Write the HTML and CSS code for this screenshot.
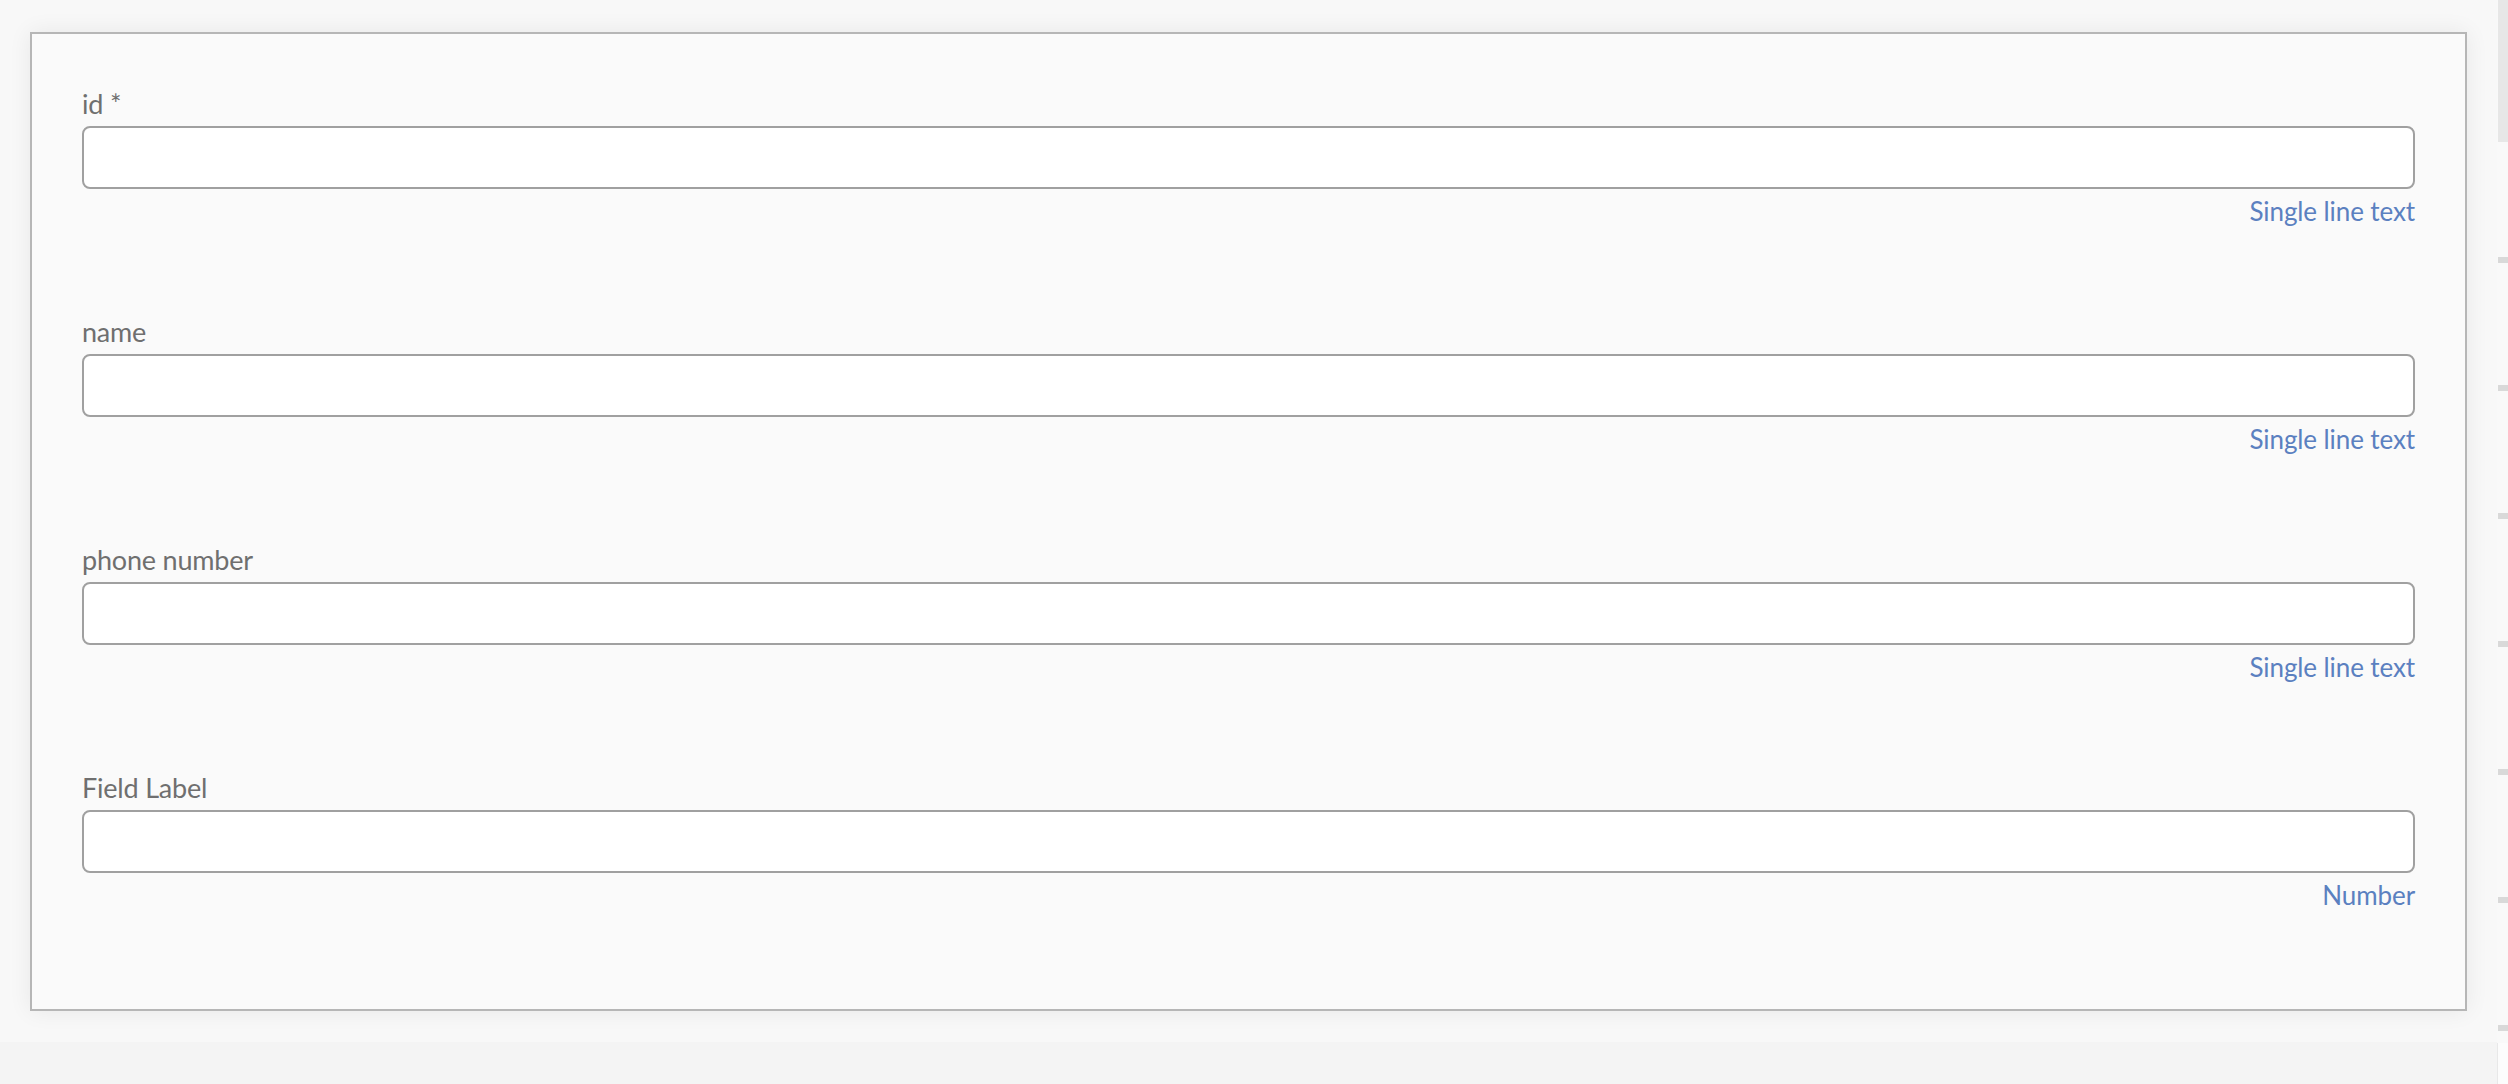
FILE: index.html
```html
<!DOCTYPE html>
<html lang="en">
<head>
<meta charset="utf-8">
<title>Form</title>
<link rel="stylesheet" href="styles.css">
</head>
<body>
  <div class="main">
    <div class="stage">
      <form class="panel">
        <div class="field">
          <label class="label">id *</label>
          <input class="input" type="text">
          <div class="helper">Single line text</div>
        </div>
        <div class="field">
          <label class="label">name</label>
          <input class="input" type="text">
          <div class="helper">Single line text</div>
        </div>
        <div class="field">
          <label class="label">phone number</label>
          <input class="input" type="text">
          <div class="helper">Single line text</div>
        </div>
        <div class="field">
          <label class="label">Field Label</label>
          <input class="input" type="text">
          <div class="helper">Number</div>
        </div>
      </form>
    </div>
    <div class="band"></div>
  </div>
  <div class="strip">
    <div class="strip-top"></div>
    <div class="ticks">
      <span class="tick"></span>
      <span class="tick"></span>
      <span class="tick"></span>
      <span class="tick"></span>
      <span class="tick"></span>
      <span class="tick"></span>
      <span class="tick"></span>
    </div>
    <div class="strip-bottom"></div>
  </div>
</body>
</html>
```

FILE: styles.css
```css
html, body {
  margin: 0;
  padding: 0;
}
body {
  width: 2508px;
  height: 1084px;
  overflow: hidden;
  display: flex;
  background: #f8f8f8;
  font-family: Lato, "Open Sans", sans-serif;
}
.main {
  width: 2497px;
  display: flex;
  flex-direction: column;
}
.stage {
  height: 1042px;
  box-sizing: border-box;
  padding: 32px 0 0 30px;
}
.panel {
  width: 2437px;
  height: 979px;
  box-sizing: border-box;
  margin: 0;
  border: 2px solid #b6b6b6;
  background: #fafafa;
  box-shadow: 0 0 22px rgba(0, 0, 0, 0.07);
  padding: 53px 50px 0 50px;
  display: flex;
  flex-direction: column;
  gap: 88px;
}
.field {
  display: flex;
  flex-direction: column;
}
.label {
  font-size: 27px;
  line-height: 34px;
  letter-spacing: -0.2px;
  color: #6f6f6f;
  margin-bottom: 5px;
}
.input {
  display: block;
  width: 100%;
  height: 63px;
  box-sizing: border-box;
  margin: 0;
  border: 2px solid #a0a0a0;
  border-radius: 8px;
  background: #ffffff;
  font: inherit;
}
.helper {
  margin-top: 6px;
  font-size: 26px;
  line-height: 32px;
  letter-spacing: -0.1px;
  color: #5b80c0;
  text-align: right;
}
.band {
  flex: 1;
  background: #f4f4f4;
}
.strip {
  width: 11px;
  display: flex;
  flex-direction: column;
  background: #f9f9f9;
}
.strip-top {
  height: 142px;
  margin-left: 1px;
  background: #e7e7e7;
}
.ticks {
  display: flex;
  flex-direction: column;
  gap: 122px;
  padding-top: 115px;
}
.tick {
  display: block;
  height: 6px;
  margin-left: 1px;
  background: #d9d9d9;
}
.strip-bottom {
  margin-top: 12px;
  flex: 1;
  border-left: 1px solid #e8e8e8;
  background: #fcfcfc;
}
```
